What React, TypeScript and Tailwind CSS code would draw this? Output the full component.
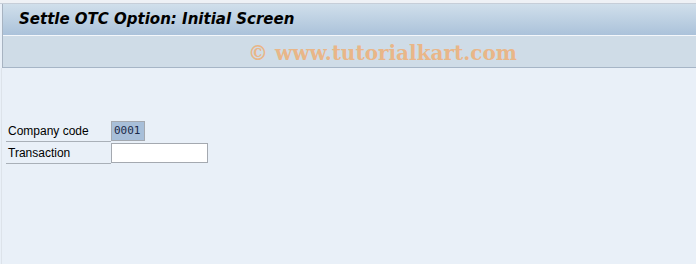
import React from 'react';

const FONT = { fontFamily: '"Liberation Sans", Arial, sans-serif' };

function FieldRow({
  label,
  width,
  value,
  selected,
}: {
  label: string;
  width: string;
  value?: string;
  selected?: boolean;
}) {
  return (
    <div className="flex items-end h-[22px]">
      <div
        className="w-[105px] h-[21px] border-b border-[#a9b0b8] pl-[2px] text-[12px] leading-[21px] text-black"
        style={FONT}
      >
        {label}
      </div>
      <div
        className={`${width} h-[20px] border border-[#a4a9b0] ${
          selected ? 'bg-[#a8bfd9]' : 'bg-white'
        } mb-[1px] px-[2px] text-[11px] leading-[18px] text-[#1b2a4a]`}
        style={{ fontFamily: '"DejaVu Sans Mono", "Liberation Mono", monospace' }}
      >
        {value}
      </div>
    </div>
  );
}

export default function App() {
  return (
    <div className="w-[696px] h-[264px] bg-[#e9f0f8] overflow-hidden">
      {/* top strip */}
      <div className="h-[4px] bg-[#eef1f5] border-b border-[#c6ced8]" />

      <div className="ml-[2px] border-l border-[#a7b3c1]">
        {/* title bar */}
        <div className="h-[31px] bg-gradient-to-b from-[#d0dfeb] to-[#abc2da] flex items-center pl-[16px]">
          <span
            className="text-[15px] font-bold italic text-black"
            style={{ fontFamily: 'Verdana, "DejaVu Sans", sans-serif' }}
          >
            Settle OTC Option: Initial Screen
          </span>
        </div>
        <div className="h-px bg-[#f4f7fb]" />
        {/* toolbar with watermark */}
        <div className="h-[32px] bg-[#cfdce7] border-b border-[#a6b5c6] flex items-center justify-center pl-[66px] pt-[2px]">
          <span
            className="text-[20px] font-bold text-[#e9b688]"
            style={{ fontFamily: '"DejaVu Serif", Georgia, serif' }}
          >
            © www.tutorialkart.com
          </span>
        </div>
      </div>

      {/* body */}
      <div className="ml-px border-l border-[#dde3ea] h-full pt-[52px] pl-[4px]">
        <FieldRow label="Company code" width="w-[34px]" value="0001" selected />
        <FieldRow label="Transaction" width="w-[97px]" />
      </div>
    </div>
  );
}
